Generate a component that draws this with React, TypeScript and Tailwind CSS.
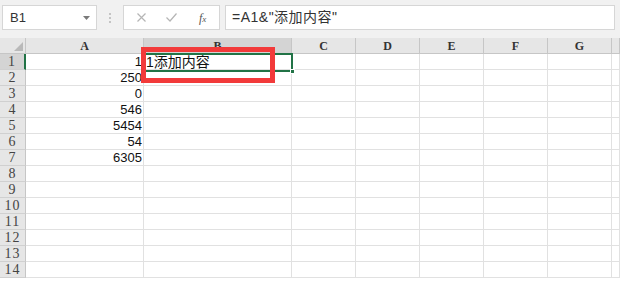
import React from 'react';

const cols = ['A', 'B', 'C', 'D', 'E', 'F', 'G', ''];
const colWidths = ['w-[118px]', 'w-[148px]', 'w-[64px]', 'w-[64px]', 'w-[64px]', 'w-[64px]', 'w-[64px]', 'w-[8px]'];
const values: Record<number, string> = { 1: '1', 2: '250', 3: '0', 4: '546', 5: '5454', 6: '54', 7: '6305' };
const rows = Array.from({ length: 14 }, (_, i) => i + 1);

const serif = { fontFamily: '"Liberation Serif", "DejaVu Serif", serif' };
const sans = { fontFamily: '"Liberation Sans", "Noto Sans CJK SC", sans-serif' };

function Toolbar() {
  return (
    <div className="h-[38px] bg-[#f1f1f1] pt-[5px] flex items-start" style={sans}>
      <div className="ml-[2px] w-[95px] h-[25px] bg-white border border-[#d6d6d6] flex items-center pl-[7px] pr-[6px]">
        <span className="text-[13px] text-[#333] flex-1">B1</span>
        <svg width="7" height="4" viewBox="0 0 7 4">
          <path d="M0 0h7L3.5 4z" fill="#7a7a7a" />
        </svg>
      </div>
      <div className="w-[26px] h-[25px] flex flex-col items-center justify-center gap-[2px]">
        <span className="w-[2px] h-[2px] bg-[#c4c4c4]" />
        <span className="w-[2px] h-[2px] bg-[#c4c4c4]" />
        <span className="w-[2px] h-[2px] bg-[#c4c4c4]" />
      </div>
      <div className="w-[97px] h-[25px] bg-white border border-[#d6d6d6] flex items-center">
        <svg className="ml-[13px]" width="9" height="9" viewBox="0 0 9 9">
          <path d="M0.5 0.5l8 8M8.5 0.5l-8 8" stroke="#b5b5b5" strokeWidth="1.2" />
        </svg>
        <svg className="ml-[20px]" width="11" height="9" viewBox="0 0 11 9">
          <path d="M0.5 4.5l3.5 3.5L10.5 0.5" stroke="#b5b5b5" strokeWidth="1.2" fill="none" />
        </svg>
        <span className="ml-[22px] text-[12px] italic text-[#555] leading-none" style={serif}>
          f<span className="text-[9px]">x</span>
        </span>
      </div>
      <div className="ml-[5px] w-[390px] h-[25px] bg-white border border-[#d6d6d6] flex items-center pl-[6px]">
        <span className="text-[14px] tracking-[0.5px] text-[#333]">=A1&amp;"添加内容"</span>
      </div>
    </div>
  );
}

function HeaderRow() {
  return (
    <div className="flex h-[16px]">
      <div className="w-[26px] bg-[#e6e6e6] border-r border-b border-[#c6c6c6] relative">
        <svg className="absolute right-[2px] bottom-[2px]" width="9" height="9" viewBox="0 0 9 9">
          <path d="M9 0v9H0z" fill="#b9b9b9" />
        </svg>
      </div>
      {cols.map((c, i) => (
        <div
          key={i}
          className={`${colWidths[i]} ${c === 'B' ? 'bg-[#d4d4d4]' : 'bg-[#e6e6e6]'} border-r border-b border-[#c6c6c6] flex items-center justify-center text-[12px] font-bold text-[#333] leading-none`}
          style={serif}
        >
          {c}
        </div>
      ))}
    </div>
  );
}

function Row({ n }: { n: number }) {
  return (
    <div className="flex h-[16px]">
      <div
        className={`w-[26px] ${n === 1 ? 'bg-[#d4d4d4] border-r-2 border-r-[#217346]' : 'bg-[#e6e6e6] border-r border-r-[#c6c6c6]'} border-b border-b-[#d0d0d0] flex items-center justify-center text-[14px] tracking-[1px] text-[#444] leading-none`}
        style={serif}
      >
        {n}
      </div>
      {cols.map((c, i) => (
        <div
          key={i}
          className={`${colWidths[i]} border-r border-b border-[#e1e1e1] flex items-center overflow-hidden whitespace-nowrap text-[#111] leading-none ${c === 'A' ? 'justify-end pr-[1px] text-[13px]' : 'pl-[2px] text-[14px]'}`}
          style={sans}
        >
          {c === 'A' ? values[n] : c === 'B' && n === 1 ? '1添加内容' : ''}
        </div>
      ))}
    </div>
  );
}

export default function App() {
  return (
    <div className="w-[620px] h-[287px] bg-white relative overflow-hidden">
      <Toolbar />
      <HeaderRow />
      {rows.map((n) => (
        <Row key={n} n={n} />
      ))}
      {/* selected cell B1 */}
      <div className="absolute left-[143px] top-[53px] w-[150px] h-[19px] border-2 border-[#217346] pointer-events-none">
        <div className="absolute right-[-4px] bottom-[-4px] w-[5px] h-[5px] bg-[#217346] border border-white" />
      </div>
      {/* annotation box */}
      <div className="absolute left-[141px] top-[47px] w-[134px] h-[36px] border-[5px] border-[#f23a3a]" />
    </div>
  );
}
